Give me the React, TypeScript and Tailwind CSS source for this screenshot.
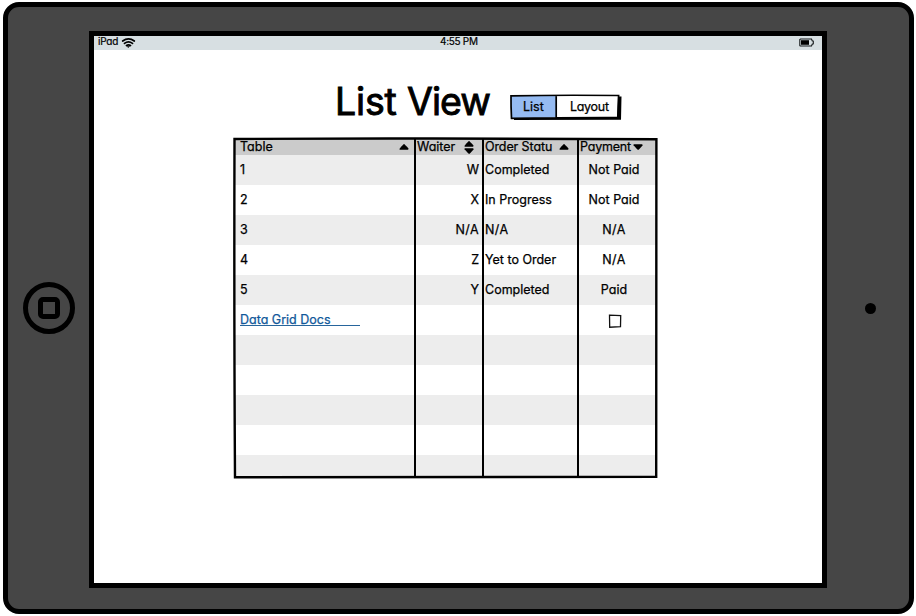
import type { ReactNode } from 'react';

const Up = () => (
  <svg width="10" height="6" viewBox="0 0 10 6"><path d="M5 .1Q5.5.1 9.5 4.6Q9.7 5.7 8.9 5.8L1 5.8Q.2 5.6.6 4.7Q4.5.1 5 .1Z" /></svg>
);
const Down = () => (
  <svg width="10" height="6" viewBox="0 0 10 6"><path d="M5 5.9Q5.5 5.9 9.5 1.4Q9.7.3 8.9.2L1 .2Q.2.4.6 1.3Q4.5 5.9 5 5.9Z" /></svg>
);

const Head = ({ children, className }: { children: ReactNode; className: string }) => (
  <div className={`flex h-[16px] items-center bg-[#cbcbcb] ${className}`}>{children}</div>
);

const Cell = ({ children, i, className }: { children?: ReactNode; i: number; className: string }) => (
  <div className={`flex items-center ${i === 10 ? 'h-[22px]' : 'h-[30px]'} ${i % 2 ? 'bg-white' : 'bg-[#ededed]'} ${className}`}>{children}</div>
);

const Value = ({ text }: { text?: string }) => (
  <span className={text === 'N/A' ? 'tracking-[0.4px]' : ''}>{text}</span>
);

const rows = [0, 1, 2, 3, 4, 5, 6, 7, 8, 9, 10];
const tables = ['1', '2', '3', '4', '5'];
const waiters = ['W', 'X', 'N/A', 'Z', 'Y'];
const statuses = ['Completed', 'In Progress', 'N/A', 'Yet to Order', 'Completed'];
const payments = ['Not Paid', 'Not Paid', 'N/A', 'N/A', 'Paid'];

function StatusBar() {
  return (
    <div className="flex h-[14px] items-center bg-[#d7dfe2] pr-[8px] pl-[4px] text-[10px] leading-[12px] [-webkit-text-stroke:0.2px]">
      <div className="flex w-[342px] items-center pb-[2px]">
        <span className="mb-[2px] w-[23px] tracking-[-0.2px] whitespace-nowrap">iPad</span>
        <svg width="15" height="11" viewBox="0 0 14 11" fill="none" stroke="#000" strokeWidth="1.7" strokeLinecap="round">
          <path d="M1.2 4Q7-.4 12.8 4M3 6.4Q7 3.4 11 6.4M5 8.5Q7 7.2 9 8.5" />
          <path d="M6 9.4H8L7 10.4Z" fill="#000" strokeWidth=".6" />
        </svg>
      </div>
      <span className="pb-[4px] tracking-[-0.3px] whitespace-nowrap">4:55 PM</span>
      <svg className="mb-[2px] ml-auto" width="15" height="9" viewBox="0 0 15 9">
        <path d="M1.5 1H12.5L13.2 2.8L14.3 3.2V5.8L13.2 6.2L12.5 8H1.2L.8 7.5V1.5Z" fill="none" stroke="#171b1c" strokeWidth="1.1" />
        <path d="M2 2.2H10V6.8H2Z" />
      </svg>
    </div>
  );
}

function Toggle() {
  return (
    <div className="relative mt-[44px] ml-[19px] h-[26px] w-[112px]">
      <svg className="absolute inset-0" width="112" height="27" viewBox="0 0 112 27">
        <path d="M4 24L107.5 23L108.5 2.5L111.5 2.5L111 25.8L4 26Z" />
        <path d="M1 1.8L46 2V23.4L1.4 24Z" fill="#95bbf2" />
        <path d="M46 2L108 1.6L107 23.4H46Z" fill="#fff" />
        <path d="M1 1.8Q50 .9 108.6 1.5Q108 12 107.8 23.5Q50 23.4 1.5 24.3Q.9 12 1 1.8ZM46.2 1.5V24" fill="none" stroke="#000" strokeWidth="1.7" />
      </svg>
      <div className="relative flex h-[26px] items-center text-[12.5px]">
        <span className="w-[46px] pl-[13px]">List</span>
        <span className="pl-[14px] tracking-[-0.3px]">Layout</span>
      </div>
    </div>
  );
}

function Grid() {
  return (
    <div className="relative mt-[13px] ml-[139px] flex h-[340px] w-[424px] pt-[2px] pl-[2px] text-[12.5px] whitespace-nowrap">
      <div className="w-[180px]">
        <Head className="justify-between pr-[6px] pl-[5px]"><span>Table</span><Up /></Head>
        {rows.map((i) => (
          <Cell key={i} i={i} className="pl-[5px]">
            {i === 5 ? <a className="mt-[-3px] h-[15px] w-[120px] border-b border-[#27659c] leading-[17px] text-[#10589a]">Data Grid Docs</a> : <span className="pt-px">{tables[i]}</span>}
          </Cell>
        ))}
      </div>
      <div className="w-[68px]">
        <Head className="pl-[2px]">
          <span className="w-[47px]">Waiter</span>
          <span className="flex flex-col gap-px"><Up /><Down /></span>
        </Head>
        {rows.map((i) => <Cell key={i} i={i} className="justify-end pt-px pr-[4px]"><Value text={waiters[i]} /></Cell>)}
      </div>
      <div className="w-[95px]">
        <Head className="pl-[2px]"><span className="w-[74px] tracking-[-0.1px]">Order Statu</span><Up /></Head>
        {rows.map((i) => <Cell key={i} i={i} className="pt-px pl-[2px]"><Value text={statuses[i]} /></Cell>)}
      </div>
      <div className="w-[79px]">
        <Head className="pl-[2px]"><span className="w-[53px] tracking-[-0.2px]">Payment</span><Down /></Head>
        {rows.map((i) => (
          <Cell key={i} i={i} className="justify-center pt-px pr-[7px]">
            {i === 5 ? (
              <svg className="ml-px" width="14" height="14" viewBox="0 0 14 14" fill="none" stroke="#111" strokeWidth="1.3"><path d="M1.5 1.2L12.7 1.7L12.5 12.6L1.7 13.2Z" /></svg>
            ) : <Value text={payments[i]} />}
          </Cell>
        ))}
      </div>
      <svg className="absolute top-0 left-0" width="425" height="342" viewBox="0 0 425 342" fill="none" stroke="#000">
        <path d="M1.5 2Q100 1.3 200 1.5T423.4 2.2Q422.8 160 423.2 339.8Q210 339.6 2 340.2Q1 180 1.5 2Z" strokeWidth="2.4" />
        <path d="M182 1V341M250 1V341M345 1V341" strokeWidth="2" />
      </svg>
    </div>
  );
}

export default function App() {
  return (
    <div className="h-[616px] w-[916px] overflow-hidden bg-white pt-[2px] pl-[3px] font-['Inter',sans-serif] text-black [font-feature-settings:'cv11'] [-webkit-text-stroke:0.25px]">
      <div className="flex h-[612px] w-[911px] rounded-[16px] border-5 border-black bg-[#464646]">
        <div className="flex w-[81px] items-center pl-[15px]">
          <svg width="52" height="52" viewBox="0 0 52 52" fill="none" stroke="#000" strokeWidth="5">
            <circle cx="26" cy="26" r="23.5" />
            <rect x="17.5" y="17.5" width="17" height="17" rx="2.5" />
          </svg>
        </div>
        <div className="mt-[24px] h-[557px] w-[738px] border-5 border-black bg-white">
          <StatusBar />
          <div className="flex h-[74px] pl-[241px]">
            <h1 className="mt-[29px] h-[45px] w-[156px] text-[37.5px] leading-[46px] tracking-[-0.2px] whitespace-nowrap [-webkit-text-stroke:0.9px]">List <span className="tracking-[-0.9px]">View</span></h1>
            <Toggle />
          </div>
          <Grid />
        </div>
        <div className="flex flex-1 items-center justify-center"><span className="ml-[4px] h-[11px] w-[11px] rounded-full bg-black" /></div>
      </div>
    </div>
  );
}
